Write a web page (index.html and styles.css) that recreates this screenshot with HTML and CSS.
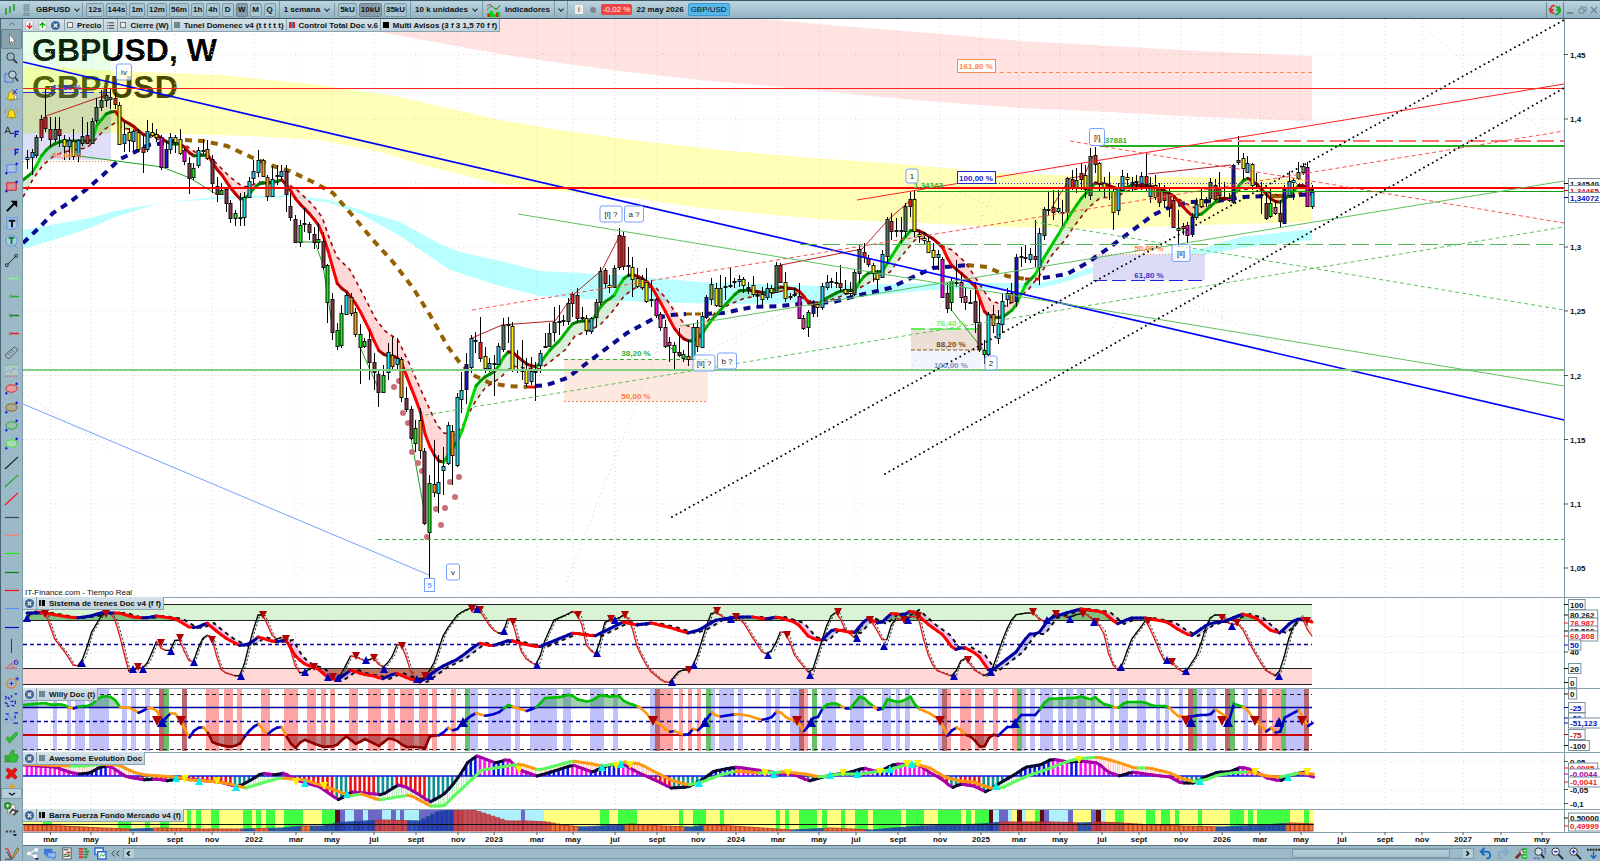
FILE: index.html
```
<!DOCTYPE html>
<html lang="es">
	<head>
		<meta charset="utf-8" />
		<title>GBPUSD, W</title>
		<meta name="viewport" content="width=device-width" />
		<link rel="stylesheet" href="styles.css">
	</head>
	<body>

		<header class="topbar">
			<span class="ico"><svg viewBox="0 0 12 12"><path d="M2 4v7M6 2v7M10 0v7" stroke="#1b6b1b"/><path d="M1 6h2v4H1zM5 4h2v4H5zM9 1h2v4H9z" fill="#2fae2f"/></svg></span>
			<span class="ico"><svg viewBox="0 0 12 12"><path d="M4 0h2v3H4zM7 0h2v3H7zM4 4h2v3H4zM7 4h2v3H7zM4 9h2v3H4zM7 9h2v3H7z" fill="none" stroke="#6b8590" stroke-width=".8"/></svg></span>
			<button class="drop symbol">GBPUSD <i></i></button>
			<div class="group">
				<button class="tf">12s</button>
				<button class="tf">144s</button>
				<button class="tf">1m</button>
				<button class="tf">12m</button>
				<button class="tf">56m</button>
				<button class="tf">1h</button>
				<button class="tf">4h</button>
				<button class="tf">D</button>
				<button class="tf on">W</button>
				<button class="tf">M</button>
				<button class="tf">Q</button>
			</div>
			<button class="drop">1 semana <i></i></button>
			<div class="group">
				<button class="tf">5kU</button>
				<button class="tf on">10kU</button>
				<button class="tf">35kU</button>
			</div>
			<button class="drop">10 k unidades <i></i></button>
			<button class="drop indic"><svg viewBox="0 0 14 14"><path d="M0 3q3-3 6 1t7-1" fill="none" stroke="#d33"/><path d="M0 7q4-6 7-2t6-3" fill="none" stroke="#2a2"/><path d="M0 14v-4h3V8h3v3h3V9h4v5z" fill="#1c1"/><path d="M1 14v-3h2v3zM9 14v-4h2v4z" fill="#d22"/></svg>Indicadores</button>
			<button class="drop only" aria-label="Lista de indicadores"><i></i></button>
			<span class="info">i</span>
			<span class="dot"></span>
			<span class="change">-0,02 %</span>
			<span class="date">22 may 2026</span>
			<span class="pair">GBP/USD</span>
			<div class="window">
				<button aria-label="Actualizar"><svg viewBox="0 0 14 14"><path d="M7 2Q2 1 2 7M0 5l2 4 3-3M6 11q-2 0-3-2" fill="none" stroke="#d33" stroke-width="2"/><path d="M7 12q5 1 5-5M9 8l3-4 2 5M8 3q2 0 3 2" fill="none" stroke="#1a1" stroke-width="2"/></svg></button>
				<button aria-label="Minimizar"><svg viewBox="0 0 12 12"><path d="M3 9h6" stroke="#6f8894" stroke-width="2"/></svg></button>
				<button aria-label="Restaurar"><svg viewBox="0 0 12 12"><path d="M3 5h5v4H3zM5 5V3h5v4H8" fill="none" stroke="#6f8894"/></svg></button>
				<button aria-label="Cerrar"><svg viewBox="0 0 12 12"><path d="M3 3l6 6M9 3l-6 6" stroke="#6f8894" stroke-width="1.5"/></svg></button>
			</div>
		</header>

		<div class="body">
			<nav class="tools">
				<button class="fold" aria-label="Subir"><svg viewBox="0 0 12 6"><path d="M3 4l3-2 3 2" fill="none" stroke="#5d7681"/></svg></button>
				<div class="list" id="tools"></div>
				<div class="peek"></div>
				<button class="more" aria-label="Bajar"><svg viewBox="0 0 12 6"><path d="M3 2l3 2 3-2" fill="none" stroke="#111" stroke-width="1.4"/></svg></button>
				<div class="foot">
					<button aria-label="Plantillas"><svg viewBox="0 0 16 16"><path d="M4 3h8v10H4z" fill="#eee" stroke="#888"/><circle cx="4" cy="4" r="4" fill="#2a8a2a"/><path d="M4 2v4M2 4h4" stroke="#fff"/><path d="M6 12l3-4 4 2M10 14l5-5" fill="none" stroke="#444" stroke-width="2"/></svg></button>
					<button aria-label="Más"><svg viewBox="0 0 16 16"><path d="M2 7h2v2H2zM6 7h2v2H6zM10 7h2v2h-2z" fill="#333"/><path d="M9 11h5l-2 2z"/></svg></button>
					<button aria-label="Dibujar"><svg viewBox="0 0 16 16"><path d="M1 3h3l4 10" fill="none" stroke="#d04040" stroke-width="1.4"/><path d="M8 13l6-11 2 1-6 10z" fill="#e8b020" stroke="#444" stroke-width=".7"/><path d="M1 14h8M3 6l4 7" stroke="#333"/></svg></button>
				</div>
			</nav>

			<main class="work">
				<section class="panel price">
					<svg id="price" viewBox="23 19 1577 578"></svg>
					<div class="chips">
						<span class="chip tight docs">
							<svg viewBox="0 0 10 10"><path d="M1 0h8v10H1z" fill="#fff" stroke="#999" stroke-width=".6"/><path d="M5 2v5M2 5l3 3 3-3" fill="none" stroke="#e22" stroke-width="1.6"/></svg>
							<svg viewBox="0 0 10 10"><path d="M1 0h8v10H1z" fill="#fff" stroke="#999" stroke-width=".6"/><path d="M5 8V3M2 5l3-3 3 3" fill="none" stroke="#1a1" stroke-width="1.6"/></svg>
							<button class="x" aria-label="Cerrar"><svg viewBox="0 0 10 10"><circle cx="5" cy="5" r="5" fill="#3f6694"/><path d="M3 3l4 4M7 3l-4 4" stroke="#fff" stroke-width="1.3"/></svg></button>
						</span>
						<span class="chip"><i class="sw box"></i>Precio</span>
						<span class="chip tight"><svg viewBox="0 0 10 10"><path d="M1 2h1M3 2h6M1 5h1M3 5h6M1 8h1M3 8h6" stroke="#333"/></svg></span>
						<span class="chip"><i class="sw box"></i>Cierre (W)</span>
						<span class="chip"><i class="sw slate"></i>Tunel Domenec v4 (t t t t t)</span>
						<span class="chip"><i class="sw multi"></i>Control Total Doc v.6</span>
						<span class="chip"><i class="sw black"></i>Multi Avisos (3 f 3 1,5 70 f f)</span>
					</div>
				</section>
				<section class="panel trains">
					<svg id="trains" viewBox="23 597 1577 91"></svg>
					<div class="chips"><span class="chip tight"><button class="x" aria-label="Cerrar"><svg viewBox="0 0 10 10"><circle cx="5" cy="5" r="5" fill="#3f6694"/><path d="M3 3l4 4M7 3l-4 4" stroke="#fff" stroke-width="1.3"/></svg></button></span><span class="chip"><i class="sw half"></i>Sistema de trenes Doc v4 (f f)</span></div>
				</section>
				<section class="panel willy">
					<svg id="willy" viewBox="23 688 1577 64"></svg>
					<div class="chips"><span class="chip tight"><button class="x" aria-label="Cerrar"><svg viewBox="0 0 10 10"><circle cx="5" cy="5" r="5" fill="#3f6694"/><path d="M3 3l4 4M7 3l-4 4" stroke="#fff" stroke-width="1.3"/></svg></button></span><span class="chip"><i class="sw slate"></i>Willy Doc (t)</span></div>
				</section>
				<section class="panel awesome">
					<svg id="awesome" viewBox="23 752 1577 57"></svg>
					<div class="chips"><span class="chip tight"><button class="x" aria-label="Cerrar"><svg viewBox="0 0 10 10"><circle cx="5" cy="5" r="5" fill="#3f6694"/><path d="M3 3l4 4M7 3l-4 4" stroke="#fff" stroke-width="1.3"/></svg></button></span><span class="chip"><i class="sw slate"></i>Awesome Evolution Doc</span></div>
				</section>
				<section class="panel force">
					<svg id="force" viewBox="23 809 1577 23"></svg>
					<div class="chips"><span class="chip tight"><button class="x" aria-label="Cerrar"><svg viewBox="0 0 10 10"><circle cx="5" cy="5" r="5" fill="#3f6694"/><path d="M3 3l4 4M7 3l-4 4" stroke="#fff" stroke-width="1.3"/></svg></button></span><span class="chip"><i class="sw half"></i>Barra Fuerza Fondo Mercado v4 (f)</span></div>
				</section>
				<section class="panel months"><svg id="months" viewBox="23 832 1577 13"></svg></section>

				<footer class="bottom">
					<button aria-label="Compartir"><svg viewBox="0 0 14 14"><path d="M11 3L3 7l8 4" fill="none" stroke="#f4f4f4" stroke-width="1.4"/><circle cx="11" cy="3" r="2" fill="#fff"/><circle cx="3" cy="7" r="2" fill="#fff"/><circle cx="10" cy="10" r="2" fill="#fff"/><path d="M9 12h5l-2 2z"/></svg></button>
					<button aria-label="Chat"><svg viewBox="0 0 14 14"><path d="M1 2h9v6H5l-2 3V8H1z" fill="#3a78d8"/><path d="M5 6h9v5h-2v2l-3-2H5z" fill="#8cbcf4" stroke="#3a78d8"/></svg></button>
					<button aria-label="Noticias"><svg viewBox="0 0 14 14"><path d="M3 1h9v12H3z" fill="#eee" stroke="#555"/><path d="M4 3h5M4 8h3M4 10h6" stroke="#333"/><path d="M7 5h4v2H7z" fill="#d33"/><path d="M8 8h3v2H8z" fill="#2a2"/></svg></button>
					<button aria-label="Órdenes"><svg viewBox="0 0 14 14"><path d="M2 2h5M2 5h5M2 8h5M2 11h5" stroke="#d33" stroke-width="2"/><path d="M8 2h3M8 5h5M8 8h4M8 11h3" stroke="#1a9a2a" stroke-width="2"/></svg></button>
					<button aria-label="Ventanas"><svg viewBox="0 0 14 14"><path d="M1 1h9v7H1z" fill="#fff" stroke="#2a6ad0" stroke-width="1.6"/><path d="M4 5h9v8H4z" fill="#fff" stroke="#2a6ad0" stroke-width="1.6"/><path d="M6 11l2-3 2 2 2-3" fill="none" stroke="#1a1"/></svg></button>
					<button class="fold-left" aria-label="Plegar"><svg viewBox="0 0 14 14"><path d="M6 4L3 7l3 3M11 4L8 7l3 3" fill="none" stroke="#333"/></svg></button>
					<div class="scroll">
						<button class="arrow" aria-label="Atrás"><svg viewBox="0 0 8 8"><path d="M5 2L3 4l2 2" fill="none" stroke="#111" stroke-width="1.4"/></svg></button>
						<div class="track"><span class="thumb"></span></div>
						<button class="arrow" aria-label="Adelante"><svg viewBox="0 0 8 8"><path d="M3 2l2 2-2 2" fill="none" stroke="#111" stroke-width="1.4"/></svg></button>
					</div>
					<button class="wide" aria-label="Deshacer"><svg viewBox="0 0 14 14"><path d="M2 5h6q4 0 4 4t-4 3M6 1L2 5l4 4" fill="none" stroke="#1565c8" stroke-width="2"/></svg></button>
					<button class="wide" aria-label="Rehacer"><svg viewBox="0 0 14 14"><path d="M12 5H6q-4 0-4 4t4 3M8 1l4 4-4 4" fill="none" stroke="#7fa8cc" stroke-width="2"/></svg></button>
					<button class="wide" aria-label="Ajustes"><svg viewBox="0 0 14 14"><path d="M7 3l2-2h4v12H7z" fill="#2fbf3f"/><path d="M9 4h3M9 7h3M9 10h3" stroke="#fff"/><path d="M1 12l6-6" stroke="#733" stroke-width="3"/><path d="M5 4l4-2-1 3 2 2-3 2z" fill="#eee" stroke="#444" stroke-width=".8"/></svg></button>
					<button class="wide" aria-label="Ajustar zoom"><svg viewBox="0 0 14 14"><circle cx="6" cy="5" r="4" fill="#cfe0e8" stroke="#333"/><path d="M9 8l3 4" stroke="#222" stroke-width="2"/><path d="M1 12h7M13 1v7" stroke="#22d" stroke-dasharray="2 1"/></svg></button>
					<button class="wide" aria-label="Alejar"><svg viewBox="0 0 14 14"><circle cx="5" cy="5" r="4" fill="#e8f0f4" stroke="#333"/><path d="M8 8l5 5" stroke="#222" stroke-width="2"/><path d="M3 5h4" stroke="#22d" stroke-width="1.5"/></svg></button>
					<button class="wide" aria-label="Acercar"><svg viewBox="0 0 14 14"><circle cx="5" cy="5" r="4" fill="#e8f0f4" stroke="#333"/><path d="M8 8l5 5" stroke="#222" stroke-width="2"/><path d="M3 5h4M5 3v4" stroke="#22d" stroke-width="1.5"/></svg></button>
					<button class="edge" aria-label="Eje"><svg viewBox="0 0 14 14"><path d="M0 3h14" stroke="#222" stroke-width="2" stroke-dasharray="2 1"/><path d="M7 5v6M4 9l3 3 3-3" fill="none" stroke="#1565c8" stroke-width="1.5"/></svg></button>
				</footer>
			</main>
		</div>

		<script src="chart.js"></script>
	</body>
</html>
```

FILE: styles.css
```
* {
	box-sizing: border-box;
	margin: 0;
	padding: 0;
}

html, body {
	height: 100%;
	overflow: hidden;
}

body {
	display: flex;
	flex-direction: column;
	background: #9bb9c6;
	color: #111;
	font-family: "Liberation Sans", Arial, sans-serif;
	font-size: 8px;
	font-weight: bold;
}

button {
	background: none;
	border: 0;
	color: inherit;
	font: inherit;
	cursor: pointer;
}

svg {
	display: block;
}

/* top bar */

.topbar {
	display: flex;
	align-items: center;
	flex: none;
	height: 19px;
	border-top: 1px solid #3d5563;
	border-bottom: 1px solid #3d5563;
	background: linear-gradient(#bcd5e1, #93b3c1);
	white-space: nowrap;
}

.ico {
	width: 16px;
	padding-left: 4px;
}

.ico svg {
	width: 12px;
	height: 12px;
}

.drop {
	display: flex;
	align-items: center;
	height: 17px;
	padding: 0 4px;
	border-left: 1px solid #7f9ba8;
}

.symbol {
	border-left: 0;
	padding: 0 2px 0 4px;
}

.drop i {
	width: 4px;
	height: 4px;
	margin: 0 1px 2px 5px;
	border: solid #222;
	border-width: 0 1px 1px 0;
	transform: rotate(45deg);
}

.drop.only {
	padding: 0 3px;
	border-right: 1px solid #7f9ba8;
}

.drop.only i {
	margin-left: 1px;
}

.indic svg {
	width: 14px;
	height: 14px;
	margin-right: 4px;
}

.group {
	display: flex;
	gap: 2px;
	padding: 0 3px;
	border-left: 1px solid #7f9ba8;
}

.tf {
	height: 14px;
	padding: 0 1px;
	min-width: 12px;
	border: 1px solid #7f9ba8;
	border-radius: 2px;
	background: #a9c5d2;
}

.tf.on {
	background: #869eab;
	border-color: #6b8591;
}

.info {
	width: 8px;
	margin: 0 7px;
	background: #eee;
	color: #777;
	text-align: center;
}

.dot {
	width: 6px;
	height: 6px;
	margin-right: 5px;
	border-radius: 50%;
	background: #7f878b;
}

.change, .pair {
	padding: 1px 2px;
	border-radius: 2px;
	background: #ee4444;
	color: #fff;
	font-weight: normal;
}

.date {
	margin: 0 4px;
}

.pair {
	border: 1px solid #3a9cd0;
	background: #55b8e8;
	color: #111;
}

.window {
	display: flex;
	align-items: center;
	margin-left: auto;
}

.window svg {
	width: 12px;
	height: 12px;
}

.window button:first-child {
	padding: 2px;
	border: solid #6b8591;
	border-width: 0 1px;
}

/* drawing tools */

.body {
	display: flex;
	flex: 1;
	min-height: 0;
}

.tools {
	display: flex;
	flex-direction: column;
	flex: none;
	width: 23px;
	border-left: 1px solid #4a6472;
	border-right: 1px solid #7f9ba8;
	background: #9bb9c6;
}

.tools button {
	display: flex;
	align-items: center;
	justify-content: center;
	width: 100%;
}

.tools .fold {
	height: 10px;
}

.fold svg, .more svg {
	width: 12px;
	height: 6px;
}

.list {
	display: flex;
	flex-direction: column;
	flex: 1;
	min-height: 0;
}

.list button {
	flex: 1;
	min-height: 0;
}

.list svg, .foot svg {
	width: 15px;
	height: 15px;
}

.list .on {
	background: #87a1ad;
	border: 1px solid #6b8591;
	border-radius: 2px;
}

.peek {
	width: 0;
	margin: 0 auto;
	border: 3px solid transparent;
	border-top: 0;
	border-bottom: 5px solid #e8a020;
}

.tools .more {
	height: 11px;
	border: 1px solid #7f9ba8;
	background: #b4ceda;
}

.foot {
	display: flex;
	flex-direction: column;
	justify-content: space-between;
	height: 62px;
	padding-top: 3px;
}

/* chart panels, the flex weights are the heights of the panels */

.work {
	display: flex;
	flex-direction: column;
	flex: 1;
	min-width: 0;
}

.panel {
	position: relative;
	min-height: 0;
	overflow: hidden;
	background: #fff;
}

.panel > svg {
	width: 100%;
	height: 100%;
}

.price { flex: 578 1 0; }
.trains { flex: 91 1 0; }
.willy { flex: 64 1 0; }
.awesome { flex: 57 1 0; }
.force { flex: 23 1 0; }
.months { flex: 13 1 0; }

.chips {
	position: absolute;
	left: 0;
	top: 0;
	display: flex;
	height: 13px;
	background: linear-gradient(#d5e2e9, #bfd2dc);
	white-space: nowrap;
}

.chip {
	display: flex;
	align-items: center;
	gap: 4px;
	padding: 0 2px;
	border: solid #8ba3ae;
	border-width: 0 1px 1px 0;
}

.tight {
	gap: 4px;
	padding: 0 2px;
}

.docs {
	padding-right: 4px;
}

.chip svg {
	width: 9px;
	height: 9px;
}

.sw {
	width: 6px;
	height: 6px;
}

.sw.box { border: 1px solid #777; background: #eee; }
.sw.slate { background: #6f8790; }
.sw.black { background: #000; }
.sw.multi { background: linear-gradient(90deg, #d22 33%, #57c 33%, #57c 66%, #d22 66%); }
.sw.half { background: linear-gradient(90deg, #222 33%, #aaa 33%, #aaa 50%, #000 50%); }

/* bottom bar */

.bottom {
	display: flex;
	align-items: center;
	flex: none;
	height: 16px;
	padding-left: 1px;
	border-top: 1px solid #5d7681;
	background: #9bb9c6;
}

.bottom > button {
	width: 17px;
	padding: 0 2px;
}

.bottom svg {
	width: 13px;
	height: 13px;
}

.bottom > .fold-left {
	width: 13px;
	padding: 0;
}

.bottom > .wide {
	width: 18px;
	padding: 0 3px 0 2px;
}

.bottom > .edge {
	width: 15px;
	padding: 0 0 0 2px;
}

.scroll {
	display: flex;
	flex: 1;
	height: 11px;
	margin: 0 3px 0 1px;
	border: 1px solid #7f9ba8;
}

.arrow {
	width: 10px;
	background: #b4ceda;
}

.bottom .arrow svg {
	width: 9px;
	height: 9px;
}

.track {
	display: flex;
	flex: 1;
	justify-content: flex-end;
	padding-right: 13px;
}

.thumb {
	width: 12%;
	border: 1px solid #7f9ba8;
	background: linear-gradient(#b4ceda, #a3bfcc);
}

/* chart text */

.panel text {
	font-size: 8px;
	font-weight: bold;
}

.panel .title {
	font-size: 32px;
}

.panel .credit, .panel .wave {
	font-weight: normal;
}
```

FILE: chart.js
```
var NS = 'http://www.w3.org/2000/svg';
var RIGHT = 1564, LAST = 1312, STEP = 4.622;

var add = function (parent, tag, attrs, text) {
	var e = document.createElementNS(NS, tag);
	for (var k in attrs) e.setAttribute(k, attrs[k]);
	if (text !== undefined) e.textContent = text;
	parent.appendChild(e);
	return e;
};

// "x,y x,y" -> [[x, y], ...]
var pts = function (s) {
	return s.trim().split(/\s+/).map(function (p) { return p.split(',').map(Number); });
};

var line = function (svg, x1, y1, x2, y2, color, w, dash, cap) {
	return add(svg, 'line', { x1: x1, y1: y1, x2: x2, y2: y2, stroke: color, 'stroke-width': w || 1, 'stroke-dasharray': dash || 'none', 'stroke-linecap': cap || 'butt' });
};

var rect = function (svg, x, y, w, h, fill, stroke) {
	return add(svg, 'rect', { x: x, y: y, width: w, height: h, fill: fill, stroke: stroke || 'none' });
};

var poly = function (svg, points, color, w, dash) {
	return add(svg, 'polyline', { points: points, fill: 'none', stroke: color, 'stroke-width': w || 1, 'stroke-dasharray': dash || 'none' });
};

var area = function (svg, points, fill, o) {
	return add(svg, 'polygon', { points: points, fill: fill, 'fill-opacity': o || 1 });
};

var text = function (svg, x, y, s, color, anchor, cls) {
	return add(svg, 'text', { x: x, y: y, fill: color || '#111', 'text-anchor': anchor || 'start', 'class': cls || '' }, s);
};

var valueAt = function (p, x) {
	for (var i = 1; i < p.length; i++) {
		if (x <= p[i][0]) {
			var t = (x - p[i - 1][0]) / (p[i][0] - p[i - 1][0]);
			return p[i - 1][1] + t * (p[i][1] - p[i - 1][1]);
		}
	}
	return p[p.length - 1][1];
};

// one short stroke per bar, coloured by the callback
var colored = function (svg, p, w, pick) {
	for (var x = p[0][0]; x < p[p.length - 1][0]; x += STEP) {
		var y1 = valueAt(p, x), y2 = valueAt(p, x + STEP);
		line(svg, x, y1, x + STEP, y2, pick(y2 - y1, (y1 + y2) / 2), w, null, 'round');
	}
};

var between = function (svg, a, b, up, down, o) {
	for (var x = Math.max(a[0][0], b[0][0]); x < LAST - 2; x += STEP) {
		var n = Math.min(x + STEP, LAST), a1 = valueAt(a, x), a2 = valueAt(a, n), b1 = valueAt(b, x), b2 = valueAt(b, n);
		area(svg, [x, a1, n, a2, n, b2, x, b1].join(' '), a1 + a2 < b1 + b2 ? up : down, o);
	}
};

var triangles = function (svg, list, dir, color, r) {
	pts(list).forEach(function (p) {
		var h = r * dir;
		area(svg, [p[0] - r, p[1] + h, p[0] + r, p[1] + h, p[0], p[1] - h].join(' '), color);
	});
};

var TICKS = '50.5 mar,91 may,133 jul,175 sept,212 nov,254 2022,296 mar,332 may,374 jul,416 sept,458 nov,494 2023,537 mar,573 may,615 jul,657 sept,698 nov,736 2024,778 mar,819 may,856 jul,898 sept,940 nov,981 2025,1019 mar,1060 may,1102 jul,1139 sept,1181 nov,1222 2026,1260 mar,1301 may,1342 jul,1385 sept,1422 nov,1463 2027,1501 mar,1542 may'.split(',').map(function (t) { return t.split(' '); });

var grid = function (svg, top, bottom, rows) {
	TICKS.forEach(function (t) { line(svg, t[0], top, t[0], bottom, '#dcdcdc', 1, '1 3'); });
	rows.forEach(function (y) { line(svg, 23, y, RIGHT, y, '#dcdcdc', 1, '1 3'); });
};

var axis = function (svg, top, bottom, labels) {
	rect(svg, RIGHT, top, 36, bottom - top, '#fff');
	line(svg, RIGHT + .5, top, RIGHT + .5, bottom, '#7a929e', 1);
	line(svg, 23, top + .5, 1600, top + .5, '#8ba3ae', 1);
	labels.forEach(function (l) {
		line(svg, RIGHT, l[0], RIGHT + 4, l[0], l[2] || '#555');
		if (l[3]) rect(svg, 1568.5, l[0] - 5, l[1].length * 4.2 + 4, 10, '#fff', '#7a929e');
		text(svg, 1570, l[0] + 3, l[1], l[2]);
	});
};

var COLORS = { r: '#f52020', g: '#54785a', y: '#fff000', c: '#30c0f4', C: '#10e8f0', m: '#ff00e8', b: '#1414c0', o: '#ff9c10', p: '#f04898', n: '#803844', l: '#10f010', h: '#80b048', k: '#000' };

// weekly bars: high, body top, body bottom, low, colour
var BARS = ('150 157 159 169 c;149 152 157 175 c;135 137 155 158 g;115 119 137 141 r;89 117 128 132 r;117 129 139 147 r;117 129 139 142 g;117 129 135 147 r;135 139 146 160 y;137 140 146 160 c;' +
	'129 141 156 160 y;139 140 155 162 c;117 136 143 146 g;122 135 143 143 r;118 121 143 144 g;98 107 120 123 g;90 100 107 111 g;88 95 100 107 g;88 97 99 109 g;93 98 104 109 r;' +
	'102 105 144 145 y;123 134 143 152 c;128 132 140 152 y;130 131 141 151 c;129 132 149 152 y;135 147 152 173 r;120 131 149 152 c;123 132 135 137 y;129 134 137 142 y;135 137 167 170 m;' +
	'140 149 167 167 b;133 137 149 154 c;135 137 142 153 y;129 139 153 155 y;148 150 161 165 m;157 163 178 194 n;163 168 177 180 l;147 150 165 168 C;139 150 151 154 k;140 149 158 160 o;' +
	'155 159 183 193 n;177 186 194 202 n;183 190 194 195 l;187 189 203 212 n;200 203 218 223 n;210 213 218 226 l;193 217 217 226 k;192 197 217 226 C;177 181 197 198 C;160 171 178 184 c;' +
	'150 160 172 177 C;159 160 176 177 o;175 177 196 201 o;166 179 196 197 C;165 175 176 185 k;165 171 176 180 c;165 171 194 212 n;193 206 217 221 n;215 219 242 243 n;220 225 242 247 l;' +
	'208 223 224 232 k;222 224 232 240 n;227 234 242 249 n;223 239 242 249 l;232 241 267 270 n;264 265 302 323 l;293 299 332 340 n;323 330 346 350 l;305 313 345 348 l;292 295 314 315 C;' +
	'293 297 313 316 o;308 312 334 337 o;324 334 347 384 l;338 341 346 348 l;330 339 362 380 n;353 362 372 390 n;370 374 392 407 n;365 375 392 393 l;343 352 372 380 C;337 355 366 370 o;' +
	'338 358 364 370 C;357 359 397 402 o;387 398 409 412 n;406 409 438 440 n;420 428 443 452 l;408 420 450 459 o;448 451 523 525 n;475 483 532 578 l;440 484 492 497 o;455 482 493 513 C;' +
	'447 466 470 495 C;422 425 463 465 C;425 431 455 485 o;393 397 465 467 C;372 390 399 413 C;353 364 389 404 b;335 338 367 373 c;332 340 341 353 k;317 342 358 362 r;347 356 368 373 y;' +
	'358 363 368 372 c;355 363 364 396 k;343 346 364 365 c;318 325 349 352 g;317 324 325 343 k;322 326 369 372 y;350 369 370 373 r;340 369 371 380 y;358 370 383 387 y;357 371 381 385 c;' +
	'362 371 372 401 k;350 353 365 373 c;333 346 347 348 g;323 333 346 347 g;307 322 332 342 g;305 321 322 335 k;315 320 321 326 k;298 303 321 325 g;292 294 303 317 r;288 295 318 322 r;' +
	'307 317 318 320 r;315 318 330 335 y;317 318 331 334 c;299 302 317 327 g;267 271 302 305 g;268 270 283 288 r;275 285 287 293 y;265 268 287 288 g;228 235 267 270 r;232 236 266 270 r;' +
	'247 265 266 277 k;257 267 279 297 y;268 278 286 288 y;275 279 287 290 y;268 282 301 303 y;280 299 300 307 k;298 299 315 318 m;312 314 327 331 p;320 327 346 348 p;337 342 345 362 p;' +
	'342 345 352 371 l;328 352 355 357 n;350 354 358 362 l;340 356 359 366 o;323 327 359 360 C;320 327 346 352 o;312 316 347 348 C;295 297 317 319 b;278 284 299 305 h;283 288 305 307 y;' +
	'275 288 306 307 h;277 286 287 300 k;268 285 286 288 k;278 281 282 288 k;275 279 281 287 c;277 279 285 293 y;282 287 288 294 k;276 285 294 297 y;292 294 295 308 r;287 294 299 307 y;' +
	'283 288 297 300 c;285 288 292 298 y;262 265 292 293 g;263 265 282 283 r;272 282 298 302 y;293 296 297 300 c;288 294 295 297 c;283 296 318 318 m;315 318 328 330 p;310 312 327 337 l;' +
	'300 306 313 317 b;302 304 307 317 y;283 286 307 310 c;275 282 287 290 c;278 281 282 288 k;272 282 283 288 k;265 283 287 292 r;280 289 293 295 y;282 291 293 297 y;270 272 294 296 g;' +
	'245 249 273 283 g;243 252 257 263 r;255 258 264 267 r;263 265 273 282 y;270 273 279 291 y;250 254 277 278 c;217 219 256 262 g;213 221 231 240 r;218 230 231 237 k;217 230 231 243 k;' +
	'203 206 231 237 g;192 199 206 217 r;190 199 231 237 y;230 234 236 243 y;232 238 240 245 y;235 241 252 253 y;243 250 257 269 y;250 254 257 270 c;257 259 297 298 m;283 293 308 313 n;' +
	'278 281 302 311 l;260 282 283 287 k;272 282 297 303 p;287 296 302 310 p;290 302 303 303 l;282 301 322 333 n;300 322 349 352 n;340 350 354 364 l;312 314 354 356 C;305 314 325 333 o;' +
	'310 323 338 344 C;293 301 324 333 C;288 293 299 307 c;283 293 302 303 o;254 257 301 307 b;247 256 257 267 k;245 257 257 263 k;248 254 259 263 c;220 256 259 267 r;228 233 267 285 c;' +
	'207 209 235 240 g;192 209 210 215 k;190 207 212 220 r;190 208 211 213 c;200 212 213 227 y;177 178 212 220 g;170 179 188 190 r;168 180 188 193 h;163 173 179 190 r;165 175 189 198 y;' +
	'148 156 195 200 g;147 155 164 173 r;162 163 183 192 y;177 183 187 197 y;172 187 188 200 k;187 191 212 230 y;183 187 210 215 c;170 176 190 191 c;173 177 179 185 y;177 182 183 192 k;' +
	'175 181 182 187 y;172 176 183 190 c;153 176 184 192 r;177 187 196 203 c;175 185 197 200 o;183 187 202 207 r;185 192 200 208 r;187 193 207 217 r;197 200 227 228 r;210 228 230 247 l;' +
	'223 226 228 235 r;222 225 235 243 m;213 217 234 237 b;198 204 217 220 c;188 199 206 208 y;197 199 199 207 k;178 182 198 202 g;179 185 199 201 r;172 188 195 202 r;182 187 188 197 y;' +
	'193 198 200 202 m;164 165 202 204 b;136 160 162 165 r;153 158 168 180 y;156 163 172 173 c;163 164 185 190 y;173 183 184 187 k;182 194 194 214 k;192 203 218 220 n;187 203 216 218 l;' +
	'200 207 213 215 p;200 213 221 227 n;185 189 223 224 b;171 181 195 197 c;178 180 182 200 c;162 172 178 180 h;163 166 172 175 h;162 167 206 207 m;185 192 206 209 C').split(';').map(function (b) { return b.split(' '); });

var FAST = pts('23,180 33,172 43,153 52,145 62,141 92,141 97,125 107,113 115,111 122,120 132,125 145,136 155,134 170,144 182,144 192,156 208,155 215,167 222,175 232,190 240,199 247,198 252,190 260,183 270,183 282,180 289,188 297,201 308,212 318,224 325,240 332,265 338,286 347,292 358,307 370,331 378,350 386,356 396,356 402,364 410,385 420,410 425,434 430,447 437,460 443,463 449,454 460,437 466,419 475,387 483,378 497,370 502,359 510,350 518,357 528,365 538,367 548,352 560,340 572,324 580,321 592,321 603,303 614,296 622,280 630,274 640,277 650,284 662,305 674,328 682,338 691,342 700,337 710,322 725,305 738,291 748,290 765,293 780,287 795,289 802,293 808,303 817,305 825,299 840,291 855,290 862,278 870,272 882,272 888,262 900,243 912,229 922,232 935,240 943,248 950,264 962,274 975,286 985,313 992,318 1003,317 1015,308 1025,285 1035,275 1045,256 1058,235 1070,215 1080,200 1095,183 1105,184 1120,190 1132,185 1150,186 1165,191 1175,197 1185,209 1192,216 1202,214 1212,205 1220,198 1232,199 1240,183 1247,178 1255,182 1263,191 1272,200 1279,203 1290,195 1300,184 1311,190');
var SLOW = pts('23,197 33,179 43,165 55,155 72,150 87,148 97,138 105,129 115,123 122,128 135,130 150,137 170,143 185,145 195,152 210,157 220,167 230,177 243,187 250,186 260,182 285,182 297,190 312,204 322,217 330,240 337,257 350,270 365,298 375,318 385,331 398,340 410,365 420,388 430,410 437,425 444,433 455,435 462,427 468,415 475,402 485,388 500,378 512,366 525,368 540,369 550,362 565,350 575,336 590,330 600,325 612,312 625,295 635,288 655,287 665,297 675,312 685,325 695,328 703,326 715,313 730,304 745,298 765,295 790,289 805,300 822,303 850,293 865,285 880,276 890,272 900,258 915,240 930,237 940,245 952,250 965,262 975,277 990,300 1005,306 1015,301 1028,290 1040,275 1052,255 1065,240 1075,225 1088,208 1100,198 1115,197 1130,190 1150,187 1170,193 1185,203 1195,208 1210,205 1225,200 1240,190 1255,188 1270,193 1285,197 1311,190');

var drawPrice = function () {
	var s = document.getElementById('price');
	var g = '#2fae2f', r = '#ff2020';

	text(s, 32, 61, 'GBPUSD, W', '#000', 'start', 'title');
	text(s, 32, 98, 'GBP/USD', '#000', 'start', 'title');
	grid(s, 19, 597, [54.5, 119, 183, 247, 311, 375.5, 439.5, 504, 568]);

	// bands
	rect(s, 23, 19, 88, 115, '#60ff60').setAttribute('opacity', .14);
	area(s, '320,19 765,19 840,26 930,33 1020,41 1110,46 1200,51 1312,56 1312,121 1200,117 1110,112 1020,108 940,102 860,95 780,87 700,80 620,71 560,63 500,54 440,43 380,32', '#ff2020', .13);
	area(s, '23,66 122,71 220,75 320,85 400,97 460,111 500,120 560,130 640,141 720,150 800,157 900,164 1000,173 1080,176 1200,177 1312,179 1312,222 1200,225 1100,229 1000,227 900,222 820,219 700,208 640,199 560,191 500,184 430,167 380,152 320,140 250,136 150,133 23,133', '#ffff00', .28);
	area(s, '23,230 90,218 115,211 160,203 215,197 290,195 330,200 370,213 400,222 440,244 460,252 500,261 540,271 620,275 700,282 820,286 930,283 1040,283 1065,277 1095,266 1145,257 1200,249 1240,237 1312,229 1312,240 1240,248 1200,256 1150,264 1095,272 1065,282 1040,288 930,290 850,298 800,303 740,304 680,303 600,300 540,296 500,286 450,270 400,236 360,214 330,203 290,197 215,199 160,203 115,217 95,226 70,235 23,249', '#00ffff', .27);

	// retracement boxes
	rect(s, 23, 92, 88, 68, '#3030d8').setAttribute('opacity', .16);
	rect(s, 564, 359, 144, 42, '#fde9df');
	rect(s, 911, 329, 70, 21, '#ecdfd6');
	rect(s, 911, 350, 70, 20, '#f2f5ff');
	rect(s, 1093, 255, 112, 25, '#dcdcf7');
	line(s, 23, 92.5, 111, 92.5, '#3030d8', 1, '14 5');
	line(s, 23, 161.5, 111, 161.5, '#ff7f50', 1, '1 2');
	line(s, 564, 359.5, 708, 359.5, g, 1, '4 3');
	line(s, 564, 401.5, 708, 401.5, '#ff7f50', 1, '2 2');
	line(s, 911, 329, 981, 329, '#60f060', 2, '14 4');
	line(s, 911, 350, 981, 350, '#8b5a20', 1, '4 2');
	line(s, 1093, 254.5, 1205, 254.5, '#ff7f50', 1, '1 2');
	line(s, 1093, 280.5, 1205, 280.5, '#2020e0', 1, '14 5');

	// faint rays
	[[567, 582, 705, 225], [23, 393, 110, 450], [1415, 19, 1553, 140], [820, 290, 960, 192], [960, 192, 1300, 355], [700, 355, 820, 295], [911, 370, 995, 190], [1100, 350, 1215, 145]].forEach(function (l) {
		line(s, l[0], l[1], l[2], l[3], '#ccc', 1, '1 4');
	});

	between(s, FAST, SLOW, '#20a020', '#ff2020', .18);

	// long average, navy while it rises and brown while it falls
	var navy = '#0a0a90', brown = '#946000';
	poly(s, '23,243 40,227 53,213 70,202 88,188 103,175 120,159 135,152 148,145 167,143 178,140', navy, 4, '7 6');
	poly(s, '185,140 203,141 227,146 253,158 273,166 290,171 313,182 333,193 353,216 373,240 393,262 413,288 430,315 448,347 460,363 473,375 490,383 507,386 527,387', brown, 4, '7 6');
	line(s, 527, 387, 535, 387, '#e01010', 3);
	poly(s, '535,386 547,385 567,378 587,363 607,348 627,333 653,319 670,315 686,314', navy, 4, '7 6');
	line(s, 686, 314, 702, 314, brown, 3, '6 3');
	poly(s, '705,314 723,313 753,307 780,306 800,304 833,302 860,295 890,288 913,277 933,268 957,266 967,265', navy, 4, '7 6');
	poly(s, '967,265 987,267 1007,276 1025,279', brown, 4, '7 6');
	line(s, 1025, 279, 1041, 279, '#e01010', 3, '5 5');
	poly(s, '1043,278 1067,274 1087,263 1110,247 1133,230 1153,215 1170,207 1190,202 1217,201 1243,197 1267,196', navy, 4, '7 6');
	line(s, 1270, 196, 1283, 196, brown, 4);
	line(s, 1288, 196, 1311, 194, navy, 4, '7 4');

	poly(s, SLOW.join(' '), '#980c0c', 1.6, '4 4');
	colored(s, FAST, 3, function (d) {
		var v = Math.min(1, Math.abs(d) / 9);
		return d > 0 ? 'rgb(' + Math.round(110 + 145 * v) + ',0,0)' : 'rgb(0,' + Math.round(100 + 120 * v) + ',0)';
	});

	// swing lines
	['46,116 106,95', '472,338 502,325 555,321 574,294 602,270 620,235', '781,265 862,249 889,219 912,199', '1052,207 1070,178 1084,176 1093,156', '1148,174 1231,165'].forEach(function (p) { poly(s, p, '#b82020'); });
	['79,156 162,167 190,178 216,194', '296,242 315,242 323,265 332,325', '360,347 379,390', '411,438 425,515', '666,345 680,354 690,358', '949,307 985,352', '1178,226 1188,235'].forEach(function (p) { poly(s, p, '#20a020'); });

	pts('394,387 399,381 403,413 408,423 412,452 418,463 422,471 427,537 441,525 436,509 445,508 450,482 455,497 459,477').forEach(function (p) {
		add(s, 'circle', { cx: p[0], cy: p[1], r: 3, fill: '#c87078' });
	});

	BARS.forEach(function (b, i) {
		var x = Math.round(27 + i * STEP) + .5;
		line(s, x, b[0], x, b[3], '#000');
		rect(s, x - 1.5, +b[1] + .5, 3, Math.max(1, b[2] - b[1]), COLORS[b[4]], '#111');
	});

	// levels and trend lines
	line(s, 23, 62, 1564, 420, '#0000ff', 1.6);
	line(s, 23, 88.5, RIGHT, 88.5, r);
	line(s, 23, 188, RIGHT, 188, '#ff0000', 2);
	line(s, 23, 370, RIGHT, 370, '#80cf80', 2);
	line(s, 378, 539.5, RIGHT, 539.5, g, 1, '4 3');
	line(s, 23, 404, 429, 575, '#78a0ff');
	line(s, 1100, 146, RIGHT, 146, '#20b020', 2);
	line(s, 917, 191.5, RIGHT, 191.5, '#10a010', 1);
	line(s, 800, 244.5, RIGHT, 244.5, '#50b850', 1, '17 6');
	line(s, 1215, 141, RIGHT, 141, '#ff7070', 2, '17 6');
	line(s, 857, 200, RIGHT, 84, r);
	line(s, 472, 310, RIGHT, 131, '#ff5050', 1, '4 3');
	line(s, 1070, 141, RIGHT, 223, '#ff5050', 1, '4 3');
	line(s, 518, 214, RIGHT, 386, '#60c060');
	line(s, 680, 326, RIGHT, 181, '#60c060');
	line(s, 425, 415, RIGHT, 227, '#60c060', 1, '4 3');
	line(s, 1034, 222, RIGHT, 310, '#60c060', 1, '4 3');
	line(s, 672, 517, RIGHT, 20, '#000', 2, '0 5', 'round');
	line(s, 885, 474, RIGHT, 88, '#000', 2, '0 5', 'round');
	line(s, 1000, 72.5, 1315, 72.5, '#ff8848', 1, '4 3');
	line(s, 996, 183.5, 1313, 183.5, '#3030d8', 1, '1 2');

	rect(s, 957.5, 59.5, 38, 13, '#fff', '#ff8848');
	text(s, 976, 69, '161,80 %', '#ff8848', 'middle');
	rect(s, 957.5, 171.5, 38, 12, '#fff', '#2020d0');
	text(s, 976, 181, '100,00 %', '#2020d0', 'middle');
	text(s, 67, 90, '61,80 %', '#3838d0', 'middle');
	text(s, 67, 158, '50,00 %', '#ff8040', 'middle');
	text(s, 636, 356, '38,20 %', g, 'middle');
	text(s, 636, 399, '50,00 %', '#ff8040', 'middle');
	text(s, 951, 326, '76,40 %', '#68f068', 'middle');
	text(s, 951, 347, '88,20 %', '#7b4818', 'middle');
	text(s, 951, 368, '100,00 %', '#7090d0', 'middle');
	text(s, 1149, 251, '50,00 %', '#ff8040', 'middle');
	text(s, 1149, 278, '61,80 %', '#3838d0', 'middle');
	text(s, 914, 188, '1,34343', g);
	text(s, 1098, 143, '1,37881', g);

	// wave counts: centre, width, height, label
	[[124, 72, 15, 16, 'iv'], [611, 214, 22, 16, '[i] ?'], [634, 214, 19, 16, 'a ?'], [453, 572, 13, 16, 'v'], [704, 363, 22, 16, '[ii] ?'], [727, 361, 19, 16, 'b ?'], [912, 176, 12, 14, '1'], [991, 363, 12, 14, '2'], [1097, 137, 15, 17, '[i]'], [1181, 253, 18, 17, '[ii]']].forEach(function (w) {
		var b = rect(s, w[0] - w[2] / 2, w[1] - w[3] / 2, w[2], w[3], '#fff', '#78a0ff');
		b.setAttribute('rx', 2);
		b.setAttribute('fill-opacity', .7);
		text(s, w[0], w[1] + 3, w[4], '#222', 'middle', 'wave');
	});
	rect(s, 424.5, 578.5, 10, 13, '#fff', '#78a0ff');
	text(s, 429.5, 588, '5', '#78a0ff', 'middle');
	text(s, 25, 595, 'IT-Finance.com - Tiempo Real', '#111', 'start', 'credit');

	axis(s, 18, 597, [[54.5, '1,45'], [119, '1,4'], [247, '1,3'], [311, '1,25'], [375.5, '1,2'], [439.5, '1,15'], [504, '1,1'], [568, '1,05'], [183.5, '1,34540', '#111', 1], [190.5, '1,34465', '#d01010', 1], [197.5, '1,34072', '#1010c0', 1]]);
};

var drawTrains = function () {
	var s = document.getElementById('trains');
	var fast = pts('27,617 34,611 45,612 55,640 65,652 73,665 77,667 84,657 91,633 103,613 110,613 115,620 121,640 126,662 129,672 138,667 143,668 148,662 157,640 162,650 170,651 176,638 179,639 188,660 193,663 201,640 207,635 212,638 217,658 222,672 239,677 244,665 251,637 258,615 263,615 269,628 274,640 282,637 288,640 293,660 298,673 305,672 312,667 317,668 325,675 332,679 339,678 346,665 351,655 365,661 374,658 379,665 384,668 393,655 398,642 403,647 408,663 413,679 425,678 434,663 444,633 458,614 470,608 480,611 489,625 496,633 503,633 508,618 513,622 520,650 527,660 537,666 545,640 554,620 566,615 573,611 580,617 587,648 597,655 604,623 611,619 616,620 623,615 630,620 638,650 649,670 662,681 669,683 680,670 688,670 694,665 699,650 706,627 712,611 719,614 725,619 737,617 743,622 754,640 764,655 773,650 780,632 787,633 793,653 802,665 811,675 818,653 826,627 833,612 838,613 845,630 855,638 862,623 867,618 874,625 885,645 892,623 895,618 904,621 912,615 919,620 926,650 935,670 954,677 959,662 966,658 974,670 986,677 993,667 1005,633 1014,615 1026,613 1033,613 1040,620 1047,622 1055,613 1069,618 1074,615 1084,613 1096,622 1103,630 1110,660 1117,671 1122,665 1131,640 1146,620 1155,640 1163,660 1170,661 1181,672 1187,670 1198,653 1208,620 1213,615 1222,615 1230,625 1237,623 1243,630 1253,650 1265,670 1277,677 1282,665 1291,630 1301,615 1306,627 1311,636');
	var slow = pts('27,613 45,613 62,616 76,618 91,616 100,613 119,613 133,617 145,618 157,616 176,619 189,627 196,628 207,623 215,630 227,639 241,646 251,643 258,637 275,642 286,640 296,657 306,665 317,668 327,677 337,680 351,670 362,674 374,676 382,679 396,673 410,679 420,682 427,677 441,667 458,659 479,643 492,646 510,640 523,644 539,647 551,642 573,633 595,636 623,622 637,625 651,623 668,627 688,633 699,630 716,620 737,617 754,617 764,619 778,617 797,623 809,637 821,641 833,629 854,633 867,618 880,624 892,613 904,615 912,610 929,625 943,635 954,650 964,647 978,655 990,672 1016,652 1029,634 1038,634 1050,618 1069,612 1081,609 1103,612 1117,624 1131,618 1146,618 1167,622 1179,630 1191,636 1208,624 1225,621 1243,614 1256,618 1270,630 1280,633 1291,622 1301,618 1311,622');
	var lag = function (p, d) {
		return p.map(function (q) { return [q[0] + d, q[1]]; }).filter(function (q) { return q[0] <= LAST; });
	};

	grid(s, 597, 688, [636.5, 652.5]);
	rect(s, 23, 604, 1289, 16, '#d8f4d4');
	rect(s, 23, 669, 1289, 15, '#fdd8d6');
	var fastLag = lag(fast, 2), slowLag = lag(slow, 7);
	// stretches of the slow train beyond 80 and 20
	for (var x = 27; x < LAST - 3; x += 3) {
		var y = valueAt(slow, x);
		if (y < 620) rect(s, x, y, 3, 620 - y, '#80c080');
		if (y > 668) rect(s, x, 668, 3, y - 668, '#c07868');
	}
	between(s, fast, fastLag, '#50b050', '#ff6060', .25);
	between(s, slow, slowLag, '#6060d0', '#d850d8', .35);
	[604.5, 620.5, 668.5, 684.5].forEach(function (y) { line(s, 23, y, LAST, y, '#222'); });
	line(s, 23, 644.5, LAST, 644.5, '#0000a0', 1.5, '4 3');
	poly(s, fastLag.join(' '), '#333', 1, '2 2');
	colored(s, fast, 1.3, function (d) { return d > 0 ? '#d82020' : '#000'; });
	poly(s, slowLag.join(' '), '#111', 2, '4 4');
	colored(s, slow, 3, function (d) { return d > 0 ? '#ff0000' : '#0000a0'; });
	triangles(s, '45,614 106,614 138,667 161,643 180,638 212,640 263,615 286,639 314,667 333,677 356,656 374,658 402,646 425,676 472,609 480,610 513,622 578,615 611,619 625,615 689,670 717,611 736,617 787,635 838,612 870,620 904,620 918,616 968,660 1033,612 1056,614 1083,614 1096,622 1148,621 1172,662 1222,618 1237,623 1307,621', -1, '#b00000', 4);
	triangles(s, '27,618 82,663 133,669 143,669 171,651 194,662 241,676 305,672 328,677 338,678 366,660 384,669 417,679 430,676 477,609 504,631 537,665 597,653 615,620 672,682 694,665 731,619 768,655 810,675 857,638 884,646 908,620 954,676 991,672 1047,620 1070,619 1094,622 1121,667 1167,660 1186,671 1232,626 1279,676', 1, '#0000b8', 4);
	axis(s, 597, 688, [[652, '40'], [604.5, '100', '#111', 1], [615, '80,262', '#111', 1], [623, '76,987', '#f02020', 1], [631, '65,500', '#111', 1], [636, '60,808', '#f02020', 1], [645, '50', '#1010c0', 1], [668.5, '20', '#111', 1], [682.5, '0', '#111', 1]]);
};

var drawWilly = function () {
	var s = document.getElementById('willy');
	var p = pts('23,705 45,703 52,705 62,704 72,709 81,706 90,706 100,697 108,696 114,698 119,707 131,708 139,713 150,707 157,711 162,723 170,713 176,714 182,723 189,738 196,728 205,727 213,743 229,747 239,745 248,732 258,723 267,735 275,728 282,727 289,742 296,748 303,739 315,744 324,747 336,746 346,736 356,744 365,739 379,746 389,738 396,740 405,747 417,747 425,748 430,736 441,735 449,727 455,732 463,722 475,713 486,716 498,713 508,705 517,708 527,711 537,707 545,698 561,697 571,694 576,699 589,702 601,695 611,697 618,695 625,702 637,706 645,711 652,721 659,723 668,732 675,731 683,735 690,734 695,726 699,732 706,720 712,712 718,717 737,714 750,716 761,720 771,718 778,710 788,719 797,721 805,732 814,717 819,717 824,705 835,703 849,710 861,695 869,703 881,712 889,696 893,702 904,701 910,696 917,708 929,713 940,720 948,737 954,727 959,728 966,735 972,737 981,748 985,746 991,734 998,736 1007,727 1014,727 1019,715 1036,715 1047,699 1069,698 1075,698 1084,696 1089,701 1094,696 1103,704 1112,706 1117,709 1125,702 1144,702 1153,706 1168,706 1177,716 1187,717 1201,715 1210,715 1215,709 1225,716 1229,722 1232,703 1246,708 1253,718 1260,723 1265,733 1270,727 1279,736 1284,718 1301,709 1306,728 1311,723');
	var zones = {
		'#c0c0fb': '23-38 53-57 67-71 75-85 89-109 122-127 131-136 145-150 470-478 488-511 515-520 530-557 563-571 590-604 613-618 650-655 711-715 719-734 738-743 766-771 775-780 790-799 822-836 850-864 882-891 896-900 905-910 938-942 1022-1026 1030-1035 1040-1053 1058-1063 1066-1073 1077-1086 1091-1095 1110-1114 1119-1128 1137-1146 1156-1160 1165-1169 1179-1183 1197-1202 1207-1216 1243-1248 1286-1304',
		'#ffa4a4': '206-219 224-233 237-242 261-270 284-298 307-316 321-326 330-335 349-358 368-381 388-395 400-414 419-428 432-437 451-456 660-673 679-683 688-692 697-701 804-808 947-951 960-971 975-984 993-998 1012-1017 1262-1267 1272-1281',
		'#bc6870': '159-164 182-187 655-660 799-804 942-947 1188-1193 1225-1230 1258-1262 1304-1309',
		'#68c068': '164-169 465-470 706-711 812-817 1017-1022 1193-1197 1230-1235 1281-1286'
	};

	grid(s, 688, 752, []);
	for (var c in zones) {
		zones[c].split(' ').forEach(function (z) {
			z = z.split('-');
			rect(s, z[0], 688, z[1] - z[0], 63, c);
		});
	}
	for (var x = 23; x < LAST - 3; x += 2) {
		var y = valueAt(p, x);
		if (y < 707) rect(s, x, y, 2, 707 - y, '#309848').setAttribute('opacity', .45);
		if (y > 735) rect(s, x, 735, 2, y - 735, '#901818').setAttribute('opacity', .55);
	}
	line(s, 23, 694.5, LAST, 694.5, '#222', 1, '4 3');
	line(s, 23, 749.5, LAST, 749.5, '#222', 1, '4 3');
	line(s, 23, 721.5, LAST, 721.5, '#0000a0', 1.5, '4 3');
	line(s, 23, 707.5, LAST, 707.5, '#0000a0', 1.4);
	line(s, 23, 735, LAST, 735, '#c80000', 2);
	colored(s, p, 2.6, function (d, y) {
		if (y < 707) return '#00c000';
		if (y > 735) return '#900000';
		return d > 0 ? '#ff9810' : '#0000c8';
	});
	triangles(s, '157,721 181,721 653,721 797,721 940,721 1186,721 1222,721 1255,721 1302,721', -1, '#b00000', 5);
	triangles(s, '162,722 463,722 705,722 811,722 1015,723 1191,722 1228,722 1279,722', 1, '#0000b0', 5);
	axis(s, 688, 752, [[694, '0', '#111', 1], [707.5, '-25', '#1010c0', 1], [718, '-50', '#1010c0', 1], [723, '-51,123', '#1010c0', 1], [734.5, '-75', '#c01010', 1], [745.5, '-100', '#111', 1]]);
};

var drawAwesome = function () {
	var s = document.getElementById('awesome');
	var a = pts('24,765 55,767 69,772 79,774 90,773 100,767 110,766 119,772 127,777 145,780 155,779 169,781 179,778 207,781 220,782 238,787 251,780 262,773 275,775 284,773 296,780 320,787 331,795 339,800 351,792 375,794 382,795 398,785 406,787 418,794 430,802 443,795 451,787 460,775 468,762 477,756 496,763 508,759 520,770 537,776 551,772 573,765 592,772 609,765 623,764 637,772 657,781 671,788 688,787 702,780 714,771 737,767 757,770 778,773 795,775 809,781 830,775 847,773 864,768 878,772 895,764 919,765 929,772 943,780 952,788 960,784 974,786 986,792 1000,783 1014,775 1026,767 1040,765 1052,759 1069,762 1081,761 1098,763 1108,772 1120,776 1132,772 1153,775 1170,777 1181,783 1194,783 1205,777 1218,772 1229,772 1241,767 1253,770 1267,778 1280,781 1291,775 1304,772 1311,777');
	var b = pts('24,764 70,766 85,766 100,764 119,765 133,772 145,775 175,777 190,780 207,781 225,783 246,788 262,783 280,778 305,780 320,785 335,790 350,796 362,794 379,800 410,795 425,803 430,806 444,806 455,795 468,783 482,770 496,768 508,766 520,764 539,770 551,767 573,761 592,764 603,766 625,762 640,764 655,772 671,780 688,785 702,782 720,775 737,771 760,773 785,772 805,774 820,777 840,774 860,774 890,770 905,765 915,764 930,768 945,777 960,781 974,782 990,788 1002,788 1014,782 1030,775 1045,770 1069,761 1078,759 1098,757 1110,760 1120,763 1135,768 1150,768 1170,773 1181,778 1195,782 1208,779 1218,775 1232,773 1250,772 1267,776 1280,777 1300,773 1311,774');

	grid(s, 752, 809, [761.5, 790.5, 803.5]);
	for (var x = 27; x < LAST - 2; x += STEP) {
		var y = valueAt(a, x), z = valueAt(b, x), rising = valueAt(a, x + STEP) <= y;
		line(s, x, y, x, z, z < y ? '#ffb8a8' : '#a0e8a0');
		line(s, x + 2, y, x + 2, z, z < y ? '#ffc8c0' : '#b8f0b8');
		line(s, x, 776, x, y, y < 776 ? (rising ? '#1010f0' : '#ff10f0') : (rising ? '#109090' : '#f01010'), 2.6);
	}
	line(s, 23, 776, LAST, 776, '#1818e0', 1.5);
	colored(s, a, 3, function (d) { return d > 0 ? '#a800a8' : '#080830'; });
	colored(s, b, 3, function (d) { return d > 0 ? '#ff9810' : '#60f860'; });
	triangles(s, '176,778 199,781 236,787 305,783 347,794 602,767 621,764 699,783 774,774 830,775 857,774 890,769 912,764 996,786 1200,781 1288,777', 1, '#00f0f0', 4);
	triangles(s, '185,779 217,781 296,782 324,786 519,770 616,766 630,765 765,773 788,773 843,773 880,772 907,764 918,764 1079,760 1255,772 1307,772', -1, '#f8f000', 4);
	axis(s, 752, 809, [[761.5, '0,05'], [789.5, '-0,05'], [803.5, '-0,1'], [768, '0,0085', '#f02020', 1], [774, '-0,0044', '#a000a0', 1], [782, '-0,0041', '#f02020', 1]]);
};

var drawForce = function () {
	var s = document.getElementById('force');
	var top = pts('24,825 60,826 100,828 130,829 160,828 200,829 240,829 280,828 300,826 320,826 335,823 345,822 380,820 418,821 425,817 435,812 445,810 463,809 475,811 490,816 505,821 525,821 545,822 560,825 580,827 600,826 630,824 660,826 690,827 705,825 730,826 760,828 790,830 830,828 870,830 890,828 920,826 950,825 980,824 1000,822 1050,822 1080,823 1096,822 1120,823 1150,825 1180,826 1220,827 1260,825 1290,823 1314,824');
	var zones = [
		['#ffff80', '23-1314'],
		['#b0f0fc', '337-544 993-1012 1022-1026 1049-1068 1101-1105'],
		['#40ff40', '43-52 118-131 145-150 160-169 187-191 196-201 211-219 243-252 256-261 266-275 284-303 322-335 600-609 618-637 679-683 693-706 720-724 776-780 785-789 799-817 822-827 841-845 855-868 873-901 906-924 938-961 966-971 975-989 1035-1040 1115-1124 1146-1155 1161-1170 1175-1179 1198-1202 1230-1244 1248-1253 1257-1290 1304-1309'],
		['#6c68c8', '340-345 354-363 368-382 391-396 400-404 419-463 521-525 999-1008 1044-1049 1068-1073 1091-1096'],
		['#600810', '335-340 989-993 1017-1022 1040-1044 1096-1101']
	];

	zones.forEach(function (z) {
		z[1].split(' ').forEach(function (r) {
			r = r.split('-');
			rect(s, r[0], 809, r[1] - r[0], 22, z[0]);
		});
	});
	for (var x = 24; x < 1310; x += STEP) {
		var y = valueAt(top, x), rising = valueAt(top, x + 12) < y - .3;
		rect(s, x, y, 4, 831 - y, rising ? '#2030b8' : (y < 823 ? '#c83c50' : '#f06830'), rising ? '#205090' : '#b83028').setAttribute('opacity', .9);
	}
	line(s, 23, 824.5, 1314, 824.5, '#111');
	axis(s, 809, 832, [[818, '0,50000', '#111', 1], [826, '0,49999', '#f02020', 1]]);
};

var drawMonths = function () {
	var s = document.getElementById('months');
	line(s, 23, 832.5, 1600, 832.5, '#8ba3ae');
	TICKS.forEach(function (t) {
		line(s, t[0], 832, t[0], 835, '#555');
		text(s, t[0], 842, t[1], '#111', 'middle');
	});
};

// tool icons, in the order of the list
var seg = function (c) { return '<path d="M8 8h8" stroke="' + c + '" stroke-width="1.5"/><circle cx="7" cy="8" r="1.2" fill="none" stroke="' + c + '"/>'; };
var flat = function (c) { return '<path d="M1 8h15" stroke="' + c + '" stroke-width="1.3"/>'; };
var diag = function (c) { return '<path d="M1 15L15 2" stroke="' + c + '" stroke-width="1.3"/>'; };
var corner = '<path d="M1 13h3M2.500 11.500v3M12 3h3M13.500 1.500v3" stroke="#1818e0" stroke-width="1.2"/>';
var oval = function (c, f) { return '<ellipse cx="8" cy="8" rx="6" ry="4" fill="' + f + '" stroke="' + c + '"/>' + corner; };
var bell = '<path d="M3 12q2-2 2-5t3-3 3 3 2 5z" fill="#ffe010" stroke="#a08000" stroke-width=".8"/><path d="M7 13h2v1H7z" fill="#a08000"/>';
var TOOLS = [
	['Cursor', '<path d="M6 2v10l2-2 2 4 1-1-1-3h2z" fill="#fff" stroke="#666" stroke-width=".8"/>'],
	['Zoom', '<circle cx="7" cy="6" r="4" fill="none" stroke="#333"/><path d="M10 9l4 4" stroke="#333" stroke-width="1.8"/>'],
	['Zoom de zona', '<path d="M1 5h9v9H1z" fill="none" stroke="#2050e0" stroke-dasharray="2 1"/><circle cx="9" cy="6" r="4" fill="#b4ccd6" stroke="#333"/><path d="M12 9l3 4" stroke="#333" stroke-width="1.6"/>'],
	['Alerta rápida', bell + '<path d="M9 2l5 4M14 1L9 7" stroke="#1818e0"/><path d="M11 5v8l2-2 2 1z" fill="#fff" stroke="#666" stroke-width=".6"/>'],
	['Alerta', bell + '<path d="M1 8q-1-4 3-6M15 8q1-4-3-6" fill="none" stroke="#d09000"/>'],
	['Fibonacci', '<path d="M1 10L4 3l3 7M2 8h4M6 10h5" fill="none" stroke="#222"/><path d="M12 14V8h4M12 11h3" fill="none" stroke="#1818e0" stroke-width="1.6"/>'],
	['Retroceso', '<path d="M1 6h11" stroke="#ff8060" stroke-dasharray="2 1"/><path d="M12 13V7h4M12 10h3" fill="none" stroke="#1818e0" stroke-width="1.6"/>'],
	['Rectángulo', '<path d="M3 4h10v8H3z" fill="#a8c4e0" stroke="#5080e0"/>' + corner],
	['Rectángulo rojo', '<path d="M3 4h10v8H3z" fill="#d89098" stroke="#e01010"/>' + corner],
	['Flecha', '<path d="M3 14l8-8" stroke="#000" stroke-width="2"/><path d="M7 3h7v7z"/>'],
	['Texto', '<path d="M3 2h11v9l-3 3H3z" fill="#a8c8e8" stroke="#6090e0"/><path d="M5 5h7M8.500 5v7" stroke="#111" stroke-width="2"/>'],
	['Nota', '<circle cx="8" cy="7" r="6" fill="#a8d0e0" stroke="#6090e0"/><path d="M11 12l3 3" stroke="#6090e0"/><path d="M5 4h6M8 4v7" stroke="#108020" stroke-width="2"/>'],
	['Segmento', '<path d="M4 12l8-8" stroke="#222"/><circle cx="3" cy="13" r="1.600" fill="none" stroke="#222"/><circle cx="13" cy="3" r="1.600" fill="none" stroke="#222"/>'],
	['Segmento 1', seg('#80ff80')], ['Segmento 2', seg('#20b020')], ['Segmento 3', seg('#108010')], ['Segmento 4', seg('#ff1010')],
	['Regla', '<path d="M1 11L11 2l4 3L5 15zM4 9l2 2M6 7l2 2M8 5l2 2" fill="none" stroke="#555"/>'],
	['Canal', '<path d="M1 2h14v11H1z" fill="#b0ccc0"/><path d="M1 2h14" stroke="#30b030" stroke-dasharray="1 1"/><path d="M1 14h14" stroke="#e04040" stroke-dasharray="1 1"/><path d="M2 10l3-3 3 3 3-5 3 3" fill="none" stroke="#8090e8"/>'],
	['Elipse roja', oval('#e02020', '#d8a0a0')], ['Elipse marrón', oval('#8a5a20', '#b0a890')], ['Elipse verde', oval('#20a040', '#98c0a8')], ['Elipse clara', oval('#30e830', '#a8d8b8')],
	['Línea', diag('#222')], ['Línea verde', diag('#20a820')], ['Línea roja', diag('#ff1010')],
	['Horizontal 1', flat('#445')], ['Horizontal 2', flat('#ff8070')], ['Horizontal 3', flat('#10f010')], ['Horizontal 4', flat('#108010')], ['Horizontal 5', flat('#ff1010')], ['Horizontal 6', flat('#5890ff')], ['Horizontal 7', flat('#1010c0')],
	['Vertical', '<path d="M8 1v15" stroke="#333"/>'],
	['Ángulo', '<path d="M14 3L2 13h12M8 8q2 2 2 5" fill="none" stroke="#e05050"/><circle cx="13" cy="7" r="2" fill="none" stroke="#1818e0"/>'],
	['Círculo', '<circle cx="8" cy="9" r="5" fill="none" stroke="#f07830" stroke-width="1.3"/><path d="M8 7v4M6 9h4M12 4h4M14 2v4" stroke="#1818e0"/>'],
	['Ondas', '<path d="M2 3v4M4 4l2 3M8 2v3M11 1h3M1 10l3 2M7 9h3M12 8v4M3 14h3M8 13l3 1" stroke="#1818e0" stroke-width="1.3"/>'],
	['Patrón', '<path d="M2 12l3-7 4 6 4-8" fill="none" stroke="#6080f0" stroke-dasharray="2 1"/><path d="M2 3h3M11 2h4M10 13h5M12 5v3M1 9h3" stroke="#1818e0" stroke-width="1.3"/>'],
	['Aceptar', '<path d="M2 9l4 5L15 4l-2-2-7 7-2-2z" fill="#30c030" stroke="#188018" stroke-width=".6"/>'],
	['Me gusta', '<path d="M1 8h3v7H1zM5 8l4-6 2 1-1 4h4l1 2-2 6H5z" fill="#30c030" stroke="#188018" stroke-width=".6"/>'],
	['Borrar', '<path d="M2 4l2-2 4 3 4-3 2 2-3 4 3 4-2 2-4-3-4 3-2-2 3-4z" fill="#f01010" stroke="#a00000" stroke-width=".6"/>']
];

var drawTools = function () {
	document.getElementById('tools').innerHTML = TOOLS.map(function (t, i) {
		return '<button' + (i ? '' : ' class="on"') + ' aria-label="' + t[0] + '"><svg viewBox="0 0 16 16">' + t[1] + '</svg></button>';
	}).join('');
};

drawTools();
drawPrice();
drawTrains();
drawWilly();
drawAwesome();
drawForce();
drawMonths();
```
